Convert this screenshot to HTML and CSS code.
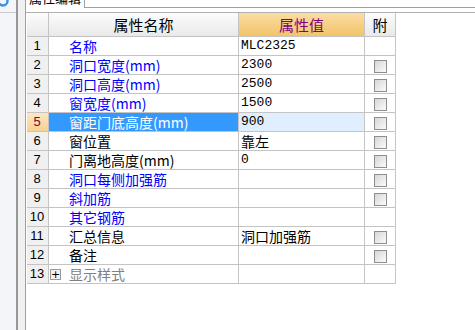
FILE: index.html
```html
<!DOCTYPE html>
<html lang="zh">
<head>
  <meta charset="UTF-8" />
  <title>属性编辑</title>
  <link rel="stylesheet" href="styles.css">
</head>
<body>
  <div class="window">
    <div class="sidebar">
      <div class="sidebar-head">
        <svg width="16" height="12" viewBox="0 0 16 12"><circle cx="3" cy="1" r="4.5" fill="none" stroke="#3b8fe0" stroke-width="2.4"/></svg>
      </div>
    </div>
    <div class="splitter"></div>
    <div class="editor">
      <div class="tabs">
        <div class="tab"><span>属性编辑</span></div>
        <div class="tabs-rest"></div>
      </div>
      <div class="grid-area">
        <table class="props">
          <thead>
            <tr>
              <th class="num"></th>
              <th class="name">属性名称</th>
              <th class="value">属性值</th>
              <th class="attach">附</th>
            </tr>
          </thead>
          <tbody>
            <tr><td class="num">1</td><td class="name blue">名称</td><td class="val mono">MLC2325</td><td class="attach"></td></tr>
            <tr><td class="num">2</td><td class="name blue">洞口宽度(mm)</td><td class="val mono">2300</td><td class="attach"><span class="check"></span></td></tr>
            <tr><td class="num">3</td><td class="name blue">洞口高度(mm)</td><td class="val mono">2500</td><td class="attach"><span class="check"></span></td></tr>
            <tr><td class="num">4</td><td class="name blue">窗宽度(mm)</td><td class="val mono">1500</td><td class="attach"><span class="check"></span></td></tr>
            <tr class="current"><td class="num">5</td><td class="name">窗距门底高度(mm)</td><td class="val mono">900</td><td class="attach"><span class="check"></span></td></tr>
            <tr><td class="num">6</td><td class="name">窗位置</td><td class="val">靠左</td><td class="attach"><span class="check"></span></td></tr>
            <tr><td class="num">7</td><td class="name">门离地高度(mm)</td><td class="val mono">0</td><td class="attach"><span class="check"></span></td></tr>
            <tr><td class="num">8</td><td class="name blue">洞口每侧加强筋</td><td class="val"></td><td class="attach"><span class="check"></span></td></tr>
            <tr><td class="num">9</td><td class="name blue">斜加筋</td><td class="val"></td><td class="attach"><span class="check"></span></td></tr>
            <tr><td class="num">10</td><td class="name blue">其它钢筋</td><td class="val"></td><td class="attach"></td></tr>
            <tr><td class="num">11</td><td class="name">汇总信息</td><td class="val">洞口加强筋</td><td class="attach"><span class="check"></span></td></tr>
            <tr><td class="num">12</td><td class="name">备注</td><td class="val"></td><td class="attach"><span class="check"></span></td></tr>
            <tr><td class="num">13</td><td class="name group"><span class="expander">+</span>显示样式</td><td class="val"></td><td class="attach"></td></tr>
          </tbody>
        </table>
      </div>
    </div>
  </div>
</body>
</html>
```

FILE: styles.css
```css
* {
  box-sizing: content-box;
}
body {
  margin: 0;
  font-family: "Noto Sans CJK SC", sans-serif;
  background: #fff;
}
.window {
  display: flex;
  height: 330px;
}
.sidebar {
  width: 16px;
  background: #f3f5f8;
}
.sidebar-head {
  height: 12px;
  border-bottom: 1px solid #c8ccd2;
  overflow: hidden;
}
.sidebar-head svg {
  display: block;
}
.splitter {
  width: 7px;
  background: #f0f0f0;
  border-left: 2px solid #979797;
  border-right: 1px solid #a0a0a0;
}
.editor {
  flex: 1;
  padding-left: 1px;
  background: #fff;
}
.tabs {
  display: flex;
  height: 8px;
  overflow: hidden;
}
.tab {
  width: 57px;
  border-right: 1px solid #a0a0a0;
}
.tab span {
  display: block;
  margin: -9px 0 0 2px;
  font-size: 13px;
  line-height: 13px;
  color: #000;
}
.tabs-rest {
  flex: 1;
  border-bottom: 1px solid #a0a0a0;
}
.grid-area {
  margin-top: 4px;
  margin-left: -1px;
  padding-left: 1px;
  border-top: 1px solid #b0b0b0;
}
.props {
  border-spacing: 0;
  table-layout: fixed;
}
.props th,
.props td {
  padding: 0;
  border-right: 1px solid #c4c4c4;
  border-bottom: 1px solid #c4c4c4;
  white-space: nowrap;
  overflow: hidden;
}
.props th {
  height: 23px;
  font-size: 15px;
  font-weight: normal;
  line-height: 23px;
  background: linear-gradient(#fcfcfc, #e9e9e9);
  text-align: center;
}
.props th.num { width: 21px; }
.props th.name { width: 189px; }
.props th.value {
  width: 125px;
  color: #800080;
  background: linear-gradient(#fbdca3, #f2c468);
}
.props th.attach { width: 30px; }
.props td {
  height: 18px;
  line-height: 18px;
  font-size: 14px;
}
.props td.num {
  background: #f0f0f0;
  text-align: center;
  font-family: "Liberation Sans", sans-serif;
  font-size: 13px;
  padding-right: 1px;
}
.props td.name {
  padding-left: 20px;
  color: #000;
}
.props td.blue {
  color: #0000ff;
}
.props td.group {
  padding-left: 1px;
  color: #808080;
}
.props td.val {
  padding-left: 2px;
}
.props td.mono {
  font-family: "Liberation Mono", monospace;
  font-size: 13px;
}
.props td.attach {
  text-align: center;
}
.props tr.current td.num {
  background: linear-gradient(#fde7c2, #f7d190);
  color: #800040;
}
.props tr.current td.name {
  background: #3399ff;
  color: #fff;
}
.props tr.current td.val {
  background: #e0efff;
}
.check {
  display: inline-block;
  width: 11px;
  height: 11px;
  border: 1px solid #8e8e8e;
  background: linear-gradient(135deg, #d6d6d6, #fbfbfb);
  vertical-align: middle;
  margin-top: -2px;
}
.expander {
  display: inline-block;
  width: 9px;
  height: 9px;
  margin-right: 8px;
  border: 1px solid #9a9a9a;
  background: #f2f2f2;
  color: #000;
  font-family: "DejaVu Sans", sans-serif;
  font-size: 11px;
  line-height: 9px;
  text-align: center;
  vertical-align: middle;
  margin-top: -3px;
}
```
